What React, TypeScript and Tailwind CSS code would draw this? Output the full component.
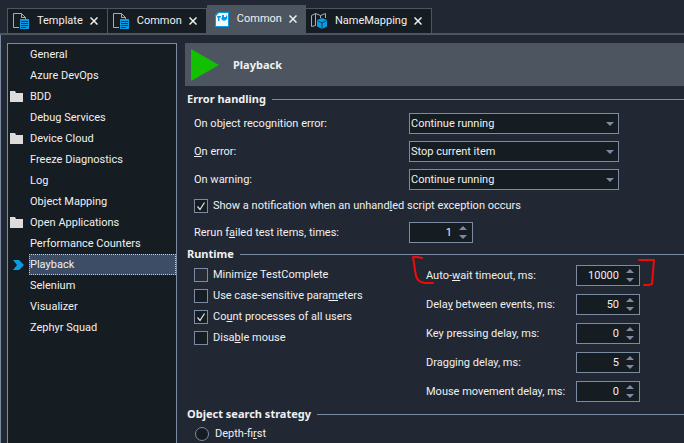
import { useState } from "react";
import type { ReactNode } from "react";

type TabIcon = "file" | "project" | "map";

const TABS: { label: string; icon: TabIcon; active?: boolean }[] = [
  { label: "Template", icon: "file" },
  { label: "Common", icon: "file" },
  { label: "Common", icon: "project", active: true },
  { label: "NameMapping", icon: "map" },
];

const PAGES: { label: string; folder?: boolean }[] = [
  { label: "General" },
  { label: "Azure DevOps" },
  { label: "BDD", folder: true },
  { label: "Debug Services" },
  { label: "Device Cloud", folder: true },
  { label: "Freeze Diagnostics" },
  { label: "Log" },
  { label: "Object Mapping" },
  { label: "Open Applications", folder: true },
  { label: "Performance Counters" },
  { label: "Playback" },
  { label: "Selenium" },
  { label: "Visualizer" },
  { label: "Zephyr Squad" },
];

function FileIcon() {
  return (
    <svg width="16" height="16" viewBox="0 0 16 16" fill="none" className="shrink-0">
      <path d="M6 14.5H.5V.5h8l4 4V6M8.5.5v4h4" stroke="#a9adb2" />
      <path d="M7 6h9v10H7z" fill="#0a9be3" />
      <path d="M8 8.5h7M8 10.5h7M8 12.5h7M8 14.5h5" stroke="#151c22" strokeWidth=".8" />
    </svg>
  );
}

function ProjectIcon() {
  return (
    <svg width="14" height="15" viewBox="0 0 14 15" fill="none" className="shrink-0">
      <path d="M3 0h11v15H0V3z" fill="#0a9be3" />
      <path d="M4 1h9v13H1V4z" fill="#f4f8fa" />
      <path d="M2 4h4v1.500H4.500V9H3V5.500H2z" fill="#0a9be3" />
      <path d="M7 3h2v2h2V3a3 3 0 0 1-1 5.500A3 3 0 0 1 6 6h1z" fill="#0a9be3" />
    </svg>
  );
}

function MapIcon() {
  return (
    <svg width="16" height="16" viewBox="0 0 16 16" fill="none" className="shrink-0">
      <path d="M4.500 12.500l-4 1v-11l4-2 5 2 5-2V5M4.500.5v12M9.500 2.500V5" stroke="#a9adb2" />
      <path d="M11 5l5 2v6.500L11 16l-5-2.500V7z" fill="#0a9be3" />
      <path d="M6.500 7.800l4.500 2 4.500-2M11 9.800V16" stroke="#151c22" strokeWidth=".7" />
    </svg>
  );
}

function FolderIcon() {
  return (
    <svg width="13" height="11" viewBox="0 0 13 11">
      <path d="M0 0h5l1 2h7v9H0z" fill="#dcdcdc" />
    </svg>
  );
}

function Tab({ label, icon, active }: { label: string; icon: TabIcon; active?: boolean }) {
  return (
    <div
      className={
        active
          ? "flex h-7 items-center bg-[#4d5660] px-2"
          : "flex h-[25px] items-center border-t border-r border-[#4d5660] bg-[#151c22] pr-2 pl-[5px]"
      }
    >
      <button type="button" className="flex items-center gap-2">
        {icon === "file" && <FileIcon />}
        {icon === "project" && <ProjectIcon />}
        {icon === "map" && <MapIcon />}
        {label}
      </button>
      <button type="button" aria-label={`Close ${label}`} className="ml-1.5 p-px">
        <svg width="8" height="8" viewBox="0 0 8 8" stroke="#f0f0f0" strokeWidth="1.5">
          <path d="M.5.5l7 7M7.500.5l-7 7" />
        </svg>
      </button>
    </div>
  );
}

function Heading({ children }: { children: ReactNode }) {
  return (
    <div className="flex h-4 items-center gap-1.5 pl-0.5">
      <h2 className="font-['Noto_Sans'] font-bold">{children}</h2>
      <div className="h-px grow bg-[#7c8ba1]" />
    </div>
  );
}

function SelectRow({ id, label, value }: { id: string; label: ReactNode; value: string }) {
  return (
    <div className="flex h-[21px] items-center">
      <label htmlFor={id} className="w-[215px] shrink-0">
        {label}
      </label>
      <div className="relative w-[210px]">
        <select
          id={id}
          defaultValue={value}
          className="block h-[21px] w-full appearance-none border border-[#7c8ba1] bg-[#151c22] pl-px outline-none"
        >
          <option>Continue running</option>
          <option>Stop current item</option>
        </select>
        <svg width="8" height="4" viewBox="0 0 8 4" className="pointer-events-none absolute top-[9px] right-[5px]">
          <path d="M0 0h8L4 4z" fill="#7c8ba1" />
        </svg>
      </div>
    </div>
  );
}

function Spinner({ id, initial }: { id: string; initial: number }) {
  const [value, setValue] = useState(initial);
  return (
    <div className="flex h-[21px] w-16 items-center border border-[#7c8ba1] bg-[#151c22] pr-[5px]">
      <input
        id={id}
        inputMode="numeric"
        value={value}
        onChange={(e) => setValue(Number(e.target.value) || 0)}
        className="h-full w-full min-w-0 bg-transparent pr-[7px] text-right outline-none"
      />
      <div className="flex shrink-0 flex-col gap-[5px]">
        <button type="button" aria-label="Increase" onClick={() => setValue(value + 1)}>
          <svg width="8" height="4" viewBox="0 0 8 4" className="block">
            <path d="M0 4h8L4 0z" fill="#7c8ba1" />
          </svg>
        </button>
        <button type="button" aria-label="Decrease" onClick={() => setValue(Math.max(0, value - 1))}>
          <svg width="8" height="4" viewBox="0 0 8 4" className="block">
            <path d="M0 0h8L4 4z" fill="#7c8ba1" />
          </svg>
        </button>
      </div>
    </div>
  );
}

function Check({ children, checked, dim }: { children: ReactNode; checked?: boolean; dim?: boolean }) {
  return (
    <label className="flex h-[21px] items-center gap-[5px]">
      <span className="grid shrink-0">
        <input
          type="checkbox"
          defaultChecked={checked}
          className={
            dim
              ? "peer col-start-1 row-start-1 size-3.5 appearance-none border border-[#7c8ba1] bg-[#262b33]"
              : "peer col-start-1 row-start-1 size-3.5 appearance-none border border-[#7c8ba1] bg-[#151c22]"
          }
        />
        <svg
          viewBox="0 0 14 14"
          fill="none"
          className="pointer-events-none invisible col-start-1 row-start-1 size-3.5 peer-checked:visible"
        >
          <path d="M3.500 7.500l2.500 3 4.500-7" stroke="#e4e6e8" strokeWidth="1.200" />
        </svg>
      </span>
      <span>{children}</span>
    </label>
  );
}

function DelayRow({ id, label, value }: { id: string; label: ReactNode; value: number }) {
  return (
    <div className="flex items-center">
      <label htmlFor={id} className="w-[150px] shrink-0">
        {label}
      </label>
      <Spinner id={id} initial={value} />
    </div>
  );
}

export default function App() {
  return (
    <div className="flex min-h-screen flex-col overflow-hidden bg-[#212834] font-[Roboto,sans-serif] text-[11px] leading-4 whitespace-nowrap text-[#f0f0f0]">
      <nav className="flex h-[35px] shrink-0 items-end border-b-2 border-[#4d5660] pl-[7px]">
        <div className="h-[25px] w-px bg-[#4d5660]" />
        {TABS.map((tab, i) => (
          <Tab key={i} {...tab} />
        ))}
      </nav>

      <div className="flex grow border-l border-[#7c8ba1] pt-2 pl-1.5">
        {/* Page list */}
        <aside className="w-[170px] shrink-0 border-x border-t border-[#7c8ba1] bg-[#151c22]">
          <ul>
            {PAGES.map(({ label, folder }) => {
              const selected = label === "Playback";
              return (
                <li key={label} className="flex h-[21px]">
                  <span className="flex w-[21px] shrink-0 items-center pl-0.5">
                    {folder && <FolderIcon />}
                    {selected && (
                      <svg width="14" height="10" viewBox="0 0 14 10">
                        <path d="M3 0h6l5 5-5 5H3l4-5z" fill="#0a9be3" />
                      </svg>
                    )}
                  </span>
                  <a
                    href="#"
                    className={
                      selected
                        ? "flex grow items-center border border-dotted border-[#c8c8c0] bg-[#3d4d66]"
                        : "flex grow items-center pt-px pl-px"
                    }
                  >
                    {label}
                  </a>
                </li>
              );
            })}
          </ul>
        </aside>

        <main className="ml-2 min-w-0 grow">
          <header className="flex h-[43px] items-center gap-3.5 bg-[#4d5660] pl-1.5">
            <svg width="28" height="32" viewBox="0 0 28 32">
              <path d="M0 0l28 16L0 32z" fill="#12c000" />
            </svg>
            <h1 className="font-['Noto_Sans'] font-bold">Playback</h1>
          </header>

          <section className="pt-[5px]">
            <Heading>Error handling</Heading>
            <div className="flex flex-col gap-[7px] pt-1.5 pl-[9px]">
              <SelectRow id="on-object" label={<>On ob<u>j</u>ect recognition error:</>} value="Continue running" />
              <SelectRow id="on-error" label={<><u>O</u>n error:</>} value="Stop current item" />
              <SelectRow id="on-warning" label="On warning:" value="Continue running" />
            </div>
            <div className="pt-[5px] pl-[9px]">
              <Check checked>
                Show a notification when an unhand<u>l</u>ed script exception occurs
              </Check>
            </div>
            <div className="flex items-center pt-1.5 pl-[9px]">
              <label htmlFor="rerun" className="w-[215px] shrink-0">
                Rerun f<u>a</u>iled test items, times:
              </label>
              <Spinner id="rerun" initial={1} />
            </div>
          </section>

          <section className="pt-[3px]">
            <Heading>Runtime</Heading>
            <div className="flex pl-[9px]">
              <div className="w-[232px] shrink-0 pt-0.5">
                <Check dim>Minimi<u>z</u>e TestComplete</Check>
                <Check>Use case-sensitive para<u>m</u>eters</Check>
                <Check checked>Co<u>u</u>nt processes of all users</Check>
                <Check>Disa<u>b</u>le mouse</Check>
              </div>
              <div className="relative flex flex-col gap-2 pt-[3px]">
                <DelayRow id="auto-wait" label={<>Auto-<u>w</u>ait timeout, ms:</>} value={10000} />
                <DelayRow id="events" label={<>Dela<u>y</u> between events, ms:</>} value={50} />
                <DelayRow id="key" label="Key pressing delay, ms:" value={0} />
                <DelayRow id="drag" label="Dragging delay, ms:" value={5} />
                <DelayRow id="mouse" label="Mouse movement delay, ms:" value={0} />
                {/* Hand-drawn brackets round the auto-wait row */}
                <svg
                  width="246"
                  height="36"
                  viewBox="0 0 246 36"
                  fill="none"
                  stroke="#f00a0a"
                  strokeWidth="2"
                  strokeLinecap="round"
                  strokeLinejoin="round"
                  className="pointer-events-none absolute -top-2 -left-4"
                >
                  <path d="M12 4L7 3H3l1 6 1 7 1 6 2 4 3 2 4 1h8" />
                  <path d="M229 6h15l-1 12-1 12-3 1h-5" />
                </svg>
              </div>
            </div>
          </section>

          <section className="pt-1">
            <Heading>Object search strategy</Heading>
            <label className="flex h-[21px] items-center gap-1.5 pt-0.5 pl-2.5">
              <input
                type="radio"
                name="strategy"
                className="size-3.5 appearance-none rounded-full border border-[#7c8ba1] bg-[#151c22] checked:bg-[#7c8ba1]"
              />
              <span>Depth-fi<u>r</u>st</span>
            </label>
          </section>
        </main>
      </div>
    </div>
  );
}
